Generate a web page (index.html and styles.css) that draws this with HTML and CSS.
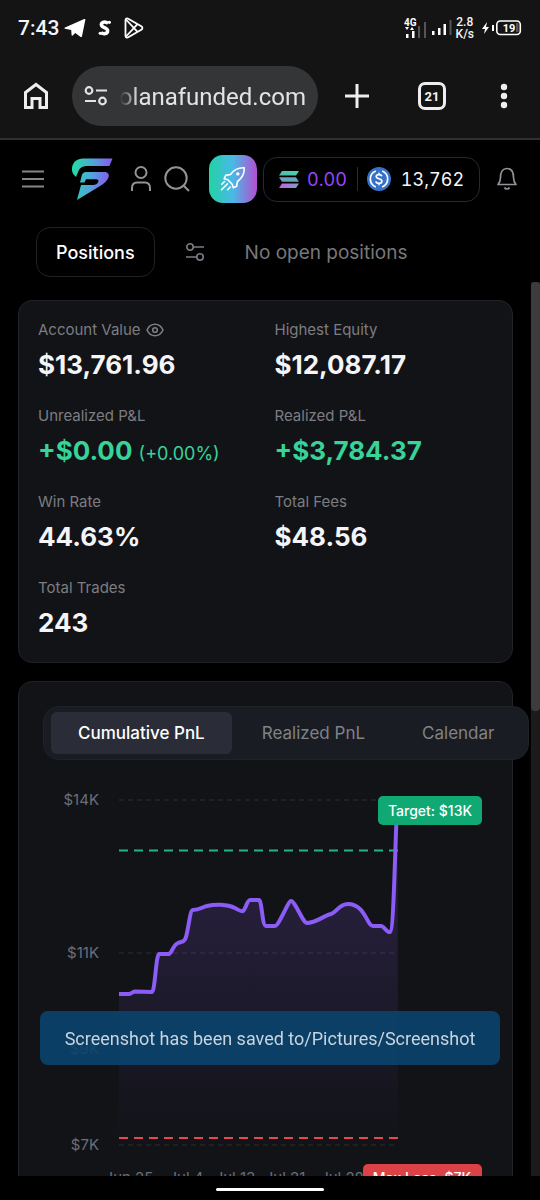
FILE: index.html
```html
<!DOCTYPE html>
<html lang="en">
<head>
<meta charset="utf-8">
<meta name="viewport" content="width=device-width, initial-scale=1">
<title>Solana Funded</title>
<link rel="stylesheet" href="styles.css">
</head>
<body>
<div class="browser">
  <div class="status">
    <span class="status-time">7:43</span>
    <svg class="status-app" width="22" height="20" viewBox="0 0 22 20" fill="#fff"><path d="M1 9.6 20.2 1c.8-.3 1.300.2 1.100 1L18 18.200c-.2.9-.9 1.100-1.700.6l-5-3.700-2.600 2.400c-.5.4-1 .2-1.100-.3L7.200 12 1 10.700c-.7-.2-.7-.800 0-1.100zM8.200 12l8.800-7-6.600 8z"/></svg>
    <svg class="status-app" width="14" height="18" viewBox="0 0 16 20"><path d="M11.500 4.500C7 1.500 3.200 4 4 7c.8 2.600 7 2.600 7 6 0 3.600-4.500 4.200-7.500 2.500" fill="none" stroke="#fff" stroke-width="4"/><circle cx="13" cy="3.500" r="1.800" fill="#fff"/><circle cx="2.500" cy="16" r="1.800" fill="#fff"/></svg>
    <svg class="status-app" width="20" height="22" viewBox="0 0 20 22" fill="none" stroke="#fff" stroke-width="1.800" stroke-linejoin="round"><path d="M1.500 3.200C1.500 1.500 2.800.9 4.200 1.700L17.300 9.300c1.500.9 1.500 2.500 0 3.400L4.200 20.300c-1.400.8-2.700.2-2.700-1.500z"/><path d="m2 2.500 11.500 12.300M2 19.500 13.500 7.200"/></svg>
    <span class="status-space"></span>
    <svg width="22" height="22" viewBox="0 0 22 22"><g fill="#fff"><path d="M2 17h2.500v4H2zM8 14h2.500v7H8zM1 10h4l-2 3zM6 13h4l-2-3z"/></g><g fill="#555"><path d="M14 9h2v12h-2zM20 5h2v16h-2z"/></g><text class="net" x="0" y="9">4G</text></svg>
    <svg class="signal" width="20" height="16" viewBox="0 0 20 16"><path fill="#fff" d="M0 11h2.500v4H0zM6 8h2.500v7H6zM11.500 4H14v11h-2.500z"/><path fill="#555" d="M17.500 0h2v15h-2z"/></svg>
    <span class="speed">2.8<br>K/s</span>
    <svg class="battery" width="40" height="16" viewBox="0 0 40 16"><path d="M5 2 0 9h3l-1 5 5-7H4z" fill="#fff"/><path d="M10 5h2v6h-2z" fill="#fff"/><rect x="14.800" y="1" width="23.500" height="13.500" rx="3.500" fill="none" stroke="#fff" stroke-width="1.600"/><path d="M34 3h2.500v9H34z" fill="#555"/><text class="battery-text" x="27" y="12">19</text></svg>
  </div>
  <div class="toolbar">
    <button class="plain" aria-label="Home"><svg width="26" height="28" viewBox="0 0 26 28" fill="none" stroke="#eee" stroke-width="3"><path d="M2.500 10.500 13 2.500l10.500 8v15H17v-9H9v9H2.500z"/></svg></button>
    <div class="address">
      <svg width="24" height="20" viewBox="0 0 24 20" fill="none" stroke="#e3e3e3" stroke-width="2.200"><circle cx="5" cy="4.500" r="3.300"/><path d="M12 4.500h11M1 15h11"/><circle cx="18.500" cy="15" r="3.300"/></svg>
      <span class="url">olanafunded.com</span>
    </div>
    <button class="plain" aria-label="New tab"><svg width="26" height="26" viewBox="0 0 26 26" stroke="#eee" stroke-width="3"><path d="M13 1v24M1 13h24"/></svg></button>
    <button class="tab-count" aria-label="21 open tabs">21</button>
    <button class="plain menu-dots" aria-label="Menu"><svg width="8" height="26" viewBox="0 0 8 26" fill="#eee"><circle cx="4" cy="4" r="3.200"/><circle cx="4" cy="13" r="3.200"/><circle cx="4" cy="22" r="3.200"/></svg></button>
  </div>
</div>

<header class="app-header">
  <button class="plain burger" aria-label="Open navigation"><svg width="22" height="18" viewBox="0 0 22 18" stroke="#85868a" stroke-width="2"><path d="M0 1.500h22M0 9h22M0 16.500h22"/></svg></button>
  <a class="logo" href="#" aria-label="Solana Funded"><svg width="42" height="42" viewBox="0 0 42 42"><defs><linearGradient id="brand" gradientUnits="userSpaceOnUse" x1="0" y1="10" x2="40" y2="16"><stop offset="0" stop-color="#20df9e"/><stop offset=".5" stop-color="#4fa9d8"/><stop offset="1" stop-color="#8a55ee"/></linearGradient></defs><g fill="url(#brand)"><path d="M41.500.5 38.500 8H17C11.500 8 9 9.500 7.500 13L5 19C2 16.500.5 13.500 1 10 1.800 4 6 .5 12 .5z"/><path d="M15 14h18c4.500 0 5.500 2.500 4.500 5.500-1 3-4.500 6-8 8.200L6 42l4-15h12c2.500 0 4.500-1 5.300-3 .7-1.700-.3-2.700-2.300-2.700H15l-1.500 3.200H9l1.500-6C11 15.500 12.500 14 15 14z"/></g></svg></a>
  <button class="plain user" aria-label="Profile"><svg width="20" height="26" viewBox="0 0 20 26" fill="none" stroke="#929397" stroke-width="2"><circle cx="10" cy="6.500" r="5.500"/><path d="M1 25v-3c0-3.500 2-5.500 5-5.500h8c3 0 5 2 5 5.500v3"/></svg></button>
  <button class="plain search" aria-label="Search"><svg width="26" height="26" viewBox="0 0 26 26" fill="none" stroke="#929397" stroke-width="2"><circle cx="12" cy="12" r="10.700"/><path d="m19.700 19.700 5.300 5.300"/></svg></button>
  <button class="launch" aria-label="Launch"><svg width="26" height="26" viewBox="0 0 26 26" fill="none" stroke="#fff" stroke-width="1.600" stroke-linejoin="round" stroke-linecap="round"><path d="M24.200 1.800c-6-.3-10.200 1.900-13.700 6.700l-4.800.9-1.500 3.300 3.600 1.100 4.400 4.400 1.100 3.600 3.300-1.500.9-4.800c4.800-3.500 7-7.700 6.700-13.700z"/><circle cx="17.800" cy="7.900" r=".9"/><path d="m4.500 15.500-2.700 2.700M7.500 17.800l-6 6M10.300 21l-2.700 2.700"/></svg></button>
  <div class="balances">
    <svg width="20" height="17" viewBox="0 0 20 17"><defs><linearGradient id="sol" x1="1" y1="0" x2="0" y2="1"><stop offset="0" stop-color="#3be0ad"/><stop offset="1" stop-color="#5dafaf"/></linearGradient><linearGradient id="sol2" x1="1" y1="0" x2="0" y2="0"><stop offset="0" stop-color="#7d9fcc"/><stop offset="1" stop-color="#c062dd"/></linearGradient></defs><path fill="url(#sol)" d="M3 0h17l-3 4.500H0z"/><path fill="#65a4bb" d="M0 6.200h17l3 4.500H3z"/><path fill="url(#sol2)" d="M3 12.400h17L17 17H0z"/></svg>
    <span class="sol-amount">0.00</span>
    <span class="divider"></span>
    <svg width="24" height="24" viewBox="0 0 24 24" fill="none"><circle cx="12" cy="12" r="12" fill="#3772c8"/><path d="M8.800 4a8.600 8.600 0 0 0 0 16M15.200 4a8.600 8.600 0 0 1 0 16" stroke="#fff" stroke-width="1.700"/><path d="M14.800 9.300c-.3-1.200-1.300-1.700-2.800-1.700-1.700 0-2.800.8-2.800 2 0 3 5.700 1.500 5.700 4.600 0 1.400-1.200 2.200-2.900 2.200s-2.900-.7-3.100-2M12 5.700v2M12 16.300v2" stroke="#fff" stroke-width="1.600"/></svg>
    <span class="usd-amount">13,762</span>
  </div>
  <button class="plain bell" aria-label="Notifications"><svg width="20" height="24" viewBox="0 0 20 24" fill="none" stroke="#929397" stroke-width="1.700"><path d="M1 17.500c1.800-2.200 2.500-4 2.500-7C3.500 5 5.500 1.500 10 1.500s6.500 3.500 6.500 9c0 3 .7 4.800 2.500 7z" stroke-linejoin="round"/><path d="M7.500 20.500c1 2 4 2 5 0"/></svg></button>
</header>

<nav class="positions">
  <button class="positions-tab">Positions</button>
  <button class="plain" aria-label="Position settings"><svg width="20" height="20" viewBox="0 0 20 20" fill="none" stroke="#7b7e88" stroke-width="1.600"><circle cx="5" cy="5" r="3.200"/><path d="M8.200 5H19M1 15h11"/><circle cx="15" cy="15" r="3.200"/></svg></button>
  <span class="positions-empty">No open positions</span>
</nav>

<div class="viewport">
  <main class="content">
    <dl class="card stats">
      <div class="stat"><dt>Account Value <svg class="eye" width="18" height="14" viewBox="0 0 18 14" fill="none" stroke="#7c7d81" stroke-width="1.600"><path d="M1 7c3.500-7.600 12.500-7.600 16 0-3.500 7.600-12.500 7.600-16 0z"/><circle cx="9" cy="7" r="2.300"/></svg></dt><dd>$13,761.96</dd></div>
      <div class="stat"><dt>Highest Equity</dt><dd>$12,087.17</dd></div>
      <div class="stat"><dt>Unrealized P&amp;L</dt><dd class="gain">+$0.00 <span class="percent">(+0.00%)</span></dd></div>
      <div class="stat"><dt>Realized P&amp;L</dt><dd class="gain">+$3,784.37</dd></div>
      <div class="stat"><dt>Win Rate</dt><dd>44.63%</dd></div>
      <div class="stat"><dt>Total Fees</dt><dd>$48.56</dd></div>
      <div class="stat"><dt>Total Trades</dt><dd>243</dd></div>
    </dl>

    <section class="card chart-card">
      <div class="tabs" role="tablist">
        <button class="tab tab-active" role="tab" aria-selected="true">Cumulative PnL</button>
        <button class="tab" role="tab" aria-selected="false">Realized PnL</button>
        <button class="tab" role="tab" aria-selected="false">Calendar</button>
      </div>
      <svg class="chart" viewBox="0 0 445 420" role="img" aria-label="Cumulative PnL chart">
        <defs><linearGradient id="fill" x1="0" y1="0" x2="0" y2="1"><stop offset="0" stop-color="#8b5cf6" stop-opacity=".23"/><stop offset="1" stop-color="#8b5cf6" stop-opacity="0"/></linearGradient></defs>
        <g transform="translate(76 20)">
          <path class="grid" d="M0 0H279M0 153H279M0 249H279M0 345H279"/>
          <path fill="url(#fill)" d="M0 194H10C13 194 13 191.500 16 191.500L33 192C36 192 37 154 40 154H50C53 153 54 145 59 143 63 141 65 143 67 137 70 126 71 110 74 110 81 110 83 107 88 106 96 104 108 104 116 108 120 110 122 112 124 111 127 109 128 100 131 100H140C143 100 143 126 147 126H156C160 126 169 101 172 101 176 101 184 123 188 123 197 123 204 116 212 114 218 112 220 104 229 104 246 104 248 126 254 126H262C265 126 268 133 271 132 275 131 276 40 278.500 -3L279 345H0Z"/>
          <path class="target-line" d="M0 50.500H279"/>
          <path class="loss-line" d="M0 338H279"/>
          <path class="pnl-line" d="M0 194H10C13 194 13 191.500 16 191.500L33 192C36 192 37 154 40 154H50C53 153 54 145 59 143 63 141 65 143 67 137 70 126 71 110 74 110 81 110 83 107 88 106 96 104 108 104 116 108 120 110 122 112 124 111 127 109 128 100 131 100H140C143 100 143 126 147 126H156C160 126 169 101 172 101 176 101 184 123 188 123 197 123 204 116 212 114 218 112 220 104 229 104 246 104 248 126 254 126H262C265 126 268 133 271 132 275 131 276 40 278.500 -3"/>
          <g class="axis axis-y"><text x="-20" y="5">$14K</text><text x="-20" y="158">$11K</text><text x="-20" y="254">$9K</text><text x="-20" y="350">$7K</text></g>
          <g class="axis axis-x"><text x="10" y="383">Jun 25</text><text x="67" y="383">Jul 4</text><text x="116" y="383">Jul 13</text><text x="166" y="383">Jul 21</text><text x="223" y="383">Jul 28</text></g>
          <rect x="259" y="-4" width="104" height="29" rx="5" fill="#10a873"/>
          <text class="badge" x="311" y="16">Target: $13K</text>
          <rect x="244" y="364" width="119" height="29" rx="5" fill="#dc4245"/>
          <text class="badge" x="303" y="383">Max Loss: $7K</text>
        </g>
      </svg>
    </section>
  </main>
  <div class="scrollbar"><div class="thumb"></div></div>
</div>

<footer class="system-nav"><span class="home-bar"></span></footer>
<div class="toast" role="status">Screenshot has been saved to/Pictures/Screenshot</div>
</body>
</html>
```
FILE: styles.css
```css
* { box-sizing: border-box; }

body {
  margin: 0;
  height: 100vh;
  display: flex;
  flex-direction: column;
  overflow: hidden;
  background: #000;
  color: #f5f5f7;
  font-family: Inter, "Liberation Sans", sans-serif;
}

svg { display: block; flex: none; }
button { font-family: inherit; color: inherit; cursor: pointer; }
.plain { padding: 0; border: 0; background: none; }

/* Browser chrome */
.browser {
  flex: none;
  background: #141414;
  border-bottom: 2px solid #303030;
  font-family: Roboto, sans-serif;
}
.status {
  display: flex;
  align-items: center;
  height: 54px;
  padding: 1px 18px 0;
}
.status-time { font-size: 21px; font-weight: 500; margin-right: 5px; }
.status-app { margin-right: 12px; }
.status-space { flex: 1; }
.net { font: bold 10px Roboto, sans-serif; fill: #fff; }
.signal { margin-left: 6px; }
.speed {
  margin: 0 8px 0 4px;
  font-size: 12px;
  line-height: 12px;
  font-weight: 500;
  text-align: center;
}
.battery-text { font: bold 11px Roboto, sans-serif; fill: #fff; text-anchor: middle; }
.toolbar {
  display: flex;
  align-items: center;
  height: 84px;
  padding: 0 32px 0 23px;
}
.address {
  flex: 1;
  min-width: 0;
  display: flex;
  align-items: center;
  gap: 12px;
  height: 60px;
  margin: 0 26px 0 23px;
  padding: 0 12px;
  border-radius: 30px;
  background: #343537;
}
.url {
  flex: 1;
  display: flex;
  justify-content: flex-end;
  overflow: hidden;
  color: #e3e3e3;
  font-size: 24px;
  line-height: 32px;
  padding-top: 2px;
  mask-image: linear-gradient(90deg, transparent, #000 18px);
}
.tab-count {
  width: 28px;
  height: 28px;
  margin: 0 54px 0 48px;
  padding: 0;
  border: 3px solid #eee;
  border-radius: 7px;
  background: none;
  font-size: 13px;
  font-weight: 700;
}

/* App header */
.app-header {
  flex: none;
  display: flex;
  align-items: center;
  height: 78px;
  padding: 0 23px 0 22px;
}
.logo { margin: 0 18px 0 27px; }
.search { margin: 0 19px 0 13px; }
.launch {
  display: grid;
  place-items: center;
  flex: none;
  width: 48px;
  height: 48px;
  padding: 0;
  border: 0;
  border-radius: 14px;
  background: linear-gradient(90deg, #22d3a2, #4ab8e8 50%, #b44fd0);
}
.balances {
  flex: 1;
  display: flex;
  align-items: center;
  height: 45px;
  margin: 0 17px 0 6px;
  padding: 0 15px;
  border: 1px solid #262930;
  border-radius: 14px;
  font-size: 18px;
  font-variant-numeric: tabular-nums;
}
.sol-amount { margin: 0 10px 0 8px; color: #9945ff; }
.divider { width: 1px; height: 24px; margin-right: 9px; background: #2a2b30; }
.usd-amount { margin-left: 10px; }

/* Positions strip */
.positions {
  flex: none;
  display: flex;
  align-items: center;
  height: 64px;
  padding: 4px 36px 0;
}
.positions-tab {
  height: 50px;
  margin-right: 30px;
  padding: 0 19px;
  border: 1px solid #222226;
  border-radius: 14px;
  background: #000;
  color: #fff;
  font-size: 18px;
  font-weight: 500;
}
.positions-empty { margin-left: 40px; color: #77787a; font-size: 19px; }

/* Scrolling area */
.viewport { flex: 1; min-height: 0; display: flex; }
.content {
  flex: 1;
  min-width: 0;
  overflow: hidden;
  padding: 18px 18px 0;
}
.scrollbar { flex: none; width: 9px; background: #1b1b1b; }
.thumb { height: 48%; border-radius: 4px; background: #3c3c3c; }
.card {
  margin: 0 0 18px;
  border: 1px solid #222328;
  border-radius: 14px;
  background: #121317;
}
.stats {
  display: grid;
  grid-template-columns: 1fr 1fr;
  gap: 24px 18px;
  padding: 19px 19px 22px;
}
dt {
  display: flex;
  align-items: center;
  gap: 5px;
  margin-bottom: 8px;
  color: #7c7d81;
  font-size: 15px;
  line-height: 20px;
}
dd { margin: 0; font-size: 26px; font-weight: 700; line-height: 34px; }
.gain { color: #37d399; }
.percent { font-size: 18px; font-weight: 400; line-height: 18px; }

/* Chart */
.chart-card { padding: 24px; }
.tabs {
  display: flex;
  gap: 3px;
  width: max-content;
  height: 54px;
  margin-bottom: 20px;
  padding: 5px 7px;
  border: 1px solid #202228;
  border-radius: 16px;
  background: #191c23;
}
.tab {
  padding: 0 27px;
  border: 0;
  border-radius: 6px;
  background: none;
  color: #818286;
  font-size: 17px;
}
.tab-active { background: #2a2d38; color: #fff; font-weight: 500; }
.chart { width: 100%; overflow: visible; }
.grid { fill: none; stroke: #2c2d33; stroke-dasharray: 5 4; }
.target-line { fill: none; stroke: #22b481; stroke-width: 2; stroke-dasharray: 9 6; }
.loss-line { fill: none; stroke: #e5484d; stroke-width: 2; stroke-dasharray: 9 6; }
.pnl-line { fill: none; stroke: #8b5cf6; stroke-width: 4; stroke-linejoin: round; }
.axis { fill: #6b6e7b; font-size: 15px; }
.axis-y { text-anchor: end; }
.axis-x { text-anchor: middle; }
.badge { fill: #fff; font-size: 14px; font-weight: 500; text-anchor: middle; }

/* System overlay */
.system-nav {
  flex: none;
  display: flex;
  justify-content: center;
  align-items: center;
  height: 24px;
  padding-top: 3px;
}
.home-bar { width: 20%; height: 3px; border-radius: 2px; background: #fff; }
.toast {
  position: fixed;
  right: 40px;
  bottom: 135px;
  left: 40px;
  padding: 16px 12px 14px;
  border-radius: 8px;
  background: rgba(10, 68, 109, .9);
  color: #c8d4df;
  font: 18px/24px Roboto, sans-serif;
  text-align: center;
}
```
